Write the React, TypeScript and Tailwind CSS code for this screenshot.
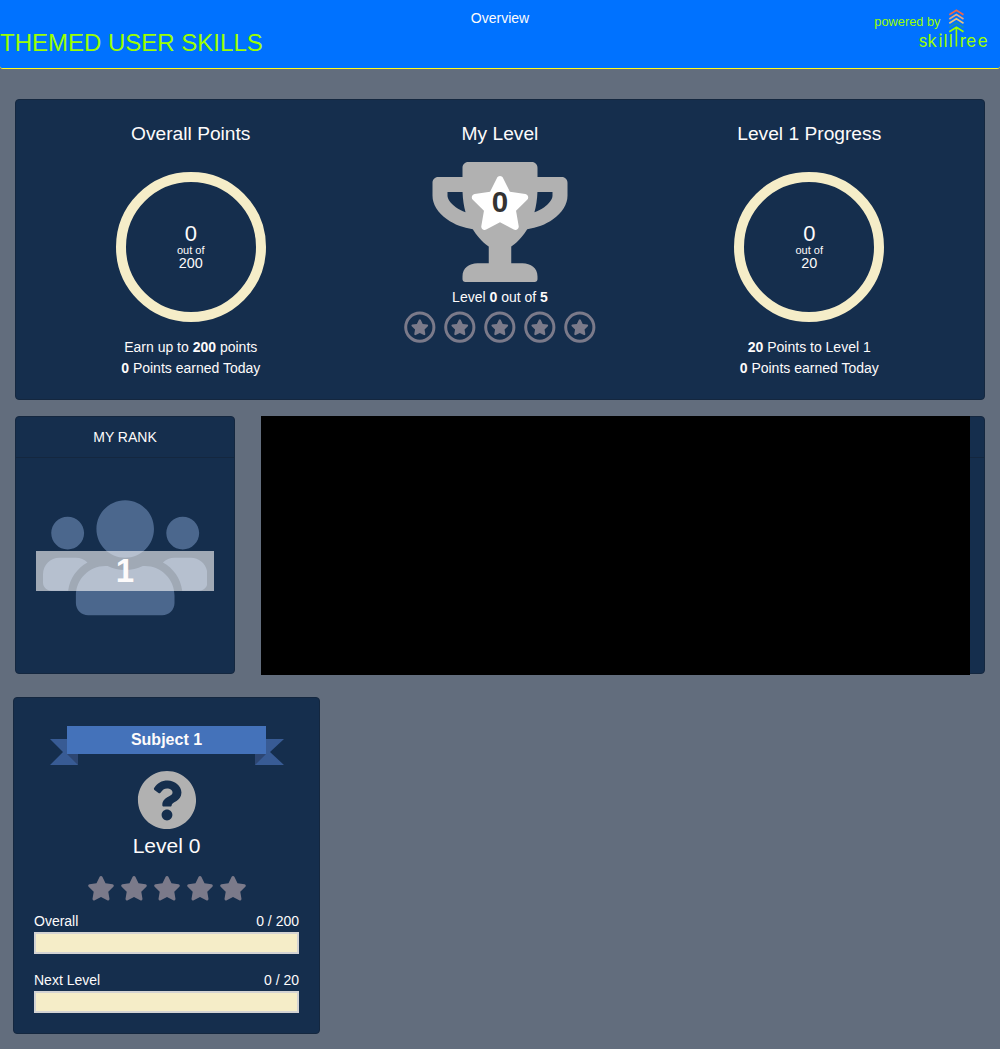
import React from "react";
import { FaTrophy, FaStar, FaQuestionCircle, FaUsers } from "react-icons/fa";

const five = [0, 1, 2, 3, 4];

function Logo() {
  return (
    <svg width="76" height="50" viewBox="916 8 76 50" fill="none" strokeWidth="1.6">
      <path d="M949.3 14.8L956.4 10.3L963.5 14.8" stroke="#f0664a" />
      <path d="M949.3 19L956.4 14.5L963.5 19" stroke="#e9a77c" />
      <path d="M949.3 23.2L956.4 18.7L963.5 23.2" stroke="#e8c27e" />
      <path d="M949.3 27.4L956.4 22.9L963.5 27.4" stroke="#1f8fa8" />
      <path d="M949.3 31.8L956.4 27.3L963.5 31.8M956.4 27.5V46.5" stroke="#9cff00" />
      <g fill="#9cff00" fontFamily="Inter, sans-serif" fontSize="17">
        <text y="46.5" x="918.4 927.6 938.6 943.4 948.7">skill</text>
        <text y="46.5" x="959.8 966.3 977.8">ree</text>
      </g>
    </svg>
  );
}

function Ring({ total }: { total: string }) {
  return (
    <div className="mt-[26px] flex h-[150px] w-[150px] flex-col items-center rounded-full border-[10px] border-[#f5edc8] pt-[41px]">
      <div className="text-[22px] leading-[22px]">0</div>
      <div className="text-[11px] leading-[11px]">out of</div>
      <div className="text-[14.4px] leading-[14px]">{total}</div>
    </div>
  );
}

function Bar({ label, value }: { label: string; value: string }) {
  return (
    <div>
      <div className="flex justify-between leading-[21px]">
        <span>{label}</span>
        <span>{value}</span>
      </div>
      <div className="h-[22px] border-2 border-[#d3d3d3] bg-[#f5edc8]" />
    </div>
  );
}

const card = "rounded-[4px] border border-[#14273f] bg-[#152e4d]";

export default function App() {
  return (
    <div className="h-[1049px] w-[1000px] overflow-hidden bg-[#626d7d] font-['Liberation_Sans',sans-serif] text-[14px] text-[#fdfbfb]">
      <header className="relative h-[69px] rounded-b-[3px] border-b border-[#fdfb21] bg-[#0072ff]">
        <div className="pt-2 text-center leading-[21px]">Overview</div>
        <h1 className="text-[24px] leading-[28px] text-[#9cff00]">THEMED USER SKILLS</h1>
        <div className="absolute top-[8px] right-[8px] flex">
          <span className="-mr-[24.5px] pt-[4px] text-[12.8px] leading-[20px] text-[#9cff00]">powered by</span>
          <Logo />
        </div>
      </header>

      <section className={`${card} mx-[15px] mt-[30px] grid h-[301px] grid-cols-[349.5px_269px_349.5px] pt-[22px] text-center`}>
        <div className="flex flex-col items-center">
          <h2 className="text-[19.2px] leading-[24px]">Overall Points</h2>
          <Ring total="200" />
          <div className="mt-[15px] leading-[21px]">
            <p>Earn up to <b>200</b> points</p>
            <p><b>0</b> Points earned Today</p>
          </div>
        </div>
        <div className="flex flex-col items-center">
          <h2 className="text-[19.2px] leading-[24px]">My Level</h2>
          <div className="relative mt-[16px] flex h-[120px] w-[136px] justify-center">
            <FaTrophy className="h-[120px] w-[136px] shrink-0 text-[#b1b1b1]" />
            <FaStar className="absolute top-[14px] left-[37px] h-[54px] w-[62px] text-white" />
            <b className="absolute top-[24px] text-[29.5px] leading-[32px] text-[#333333]">0</b>
          </div>
          <p className="mt-[5px] leading-[21px]">Level <b>0</b> out of <b>5</b></p>
          <div className="mt-[3px] flex gap-[8px] text-[#7b7a8a]">
            {five.map((i) => (
              <svg key={i} width="32" height="32" viewBox="0 0 32 32" fill="none">
                <circle cx="15.8" cy="16.2" r="14.1" stroke="currentColor" strokeWidth="3" />
                <FaStar x="6.8" y="7.2" size={18} fill="currentColor" />
              </svg>
            ))}
          </div>
        </div>
        <div className="flex flex-col items-center">
          <h2 className="text-[19.2px] leading-[24px]">Level 1 Progress</h2>
          <Ring total="20" />
          <div className="mt-[15px] leading-[21px]">
            <p><b>20</b> Points to Level 1</p>
            <p><b>0</b> Points earned Today</p>
          </div>
        </div>
      </section>

      <div className="mx-[15px] mt-[16px] flex h-[259px] items-start justify-between">
        <section className={`${card} h-[258px] w-[220px]`}>
          <h3 className="h-[41px] border-b border-[#14273f] text-center leading-[41px]">MY RANK</h3>
          <div className="relative mx-[20px] mt-[34px] flex h-[132px] justify-center">
            <FaUsers className="relative -left-[0.3px] h-[131.5px] w-[164.4px] text-[#4b678d]" />
            <div className="absolute top-[59px] h-[40px] w-full bg-[#fdfbfb]/60 text-center text-[33px] leading-[40px] font-bold text-[#fdfbfb]">1</div>
          </div>
        </section>
        <section className={`${card} h-[258px] w-[724px]`}>
          <div className="h-[41px] border-b border-[#14273f]" />
          <div className="-mt-[42px] -ml-px h-[259px] w-[709px] bg-black" />
        </section>
      </div>

      <section className={`${card} mt-[22px] ml-[13px] h-[337px] w-[307px] px-[20px] pt-[28px]`}>
        <div className="relative mx-[16px] h-[39px]">
          <svg className="absolute" width="234" height="39">
            <path d="M0 13H28V39H0L13 26ZM234 13H205V39H234L220 26Z" fill="#385b94" />
            <path d="M17 28H28V39ZM216 28H205V39Z" fill="#2d4672" />
          </svg>
          <div className="relative mx-auto h-[28px] w-[199px] bg-[#4472ba] text-center text-[16px] leading-[28px] font-bold">Subject 1</div>
        </div>
        <FaQuestionCircle className="mx-auto mt-[4.5px] h-[60px] w-[60px] text-[#b1b1b1]" />
        <div className="mt-[3.5px] text-center text-[21px] leading-[26px]">Level 0</div>
        <div className="mt-[17px] flex justify-center gap-[5px] text-[#7b7a8a]">
          {five.map((i) => (
            <FaStar key={i} className="h-[24.5px] w-[28px]" />
          ))}
        </div>
        <div className="mt-[10.5px] flex flex-col gap-[16px]">
          <Bar label="Overall" value="0 / 200" />
          <Bar label="Next Level" value="0 / 20" />
        </div>
      </section>
    </div>
  );
}
